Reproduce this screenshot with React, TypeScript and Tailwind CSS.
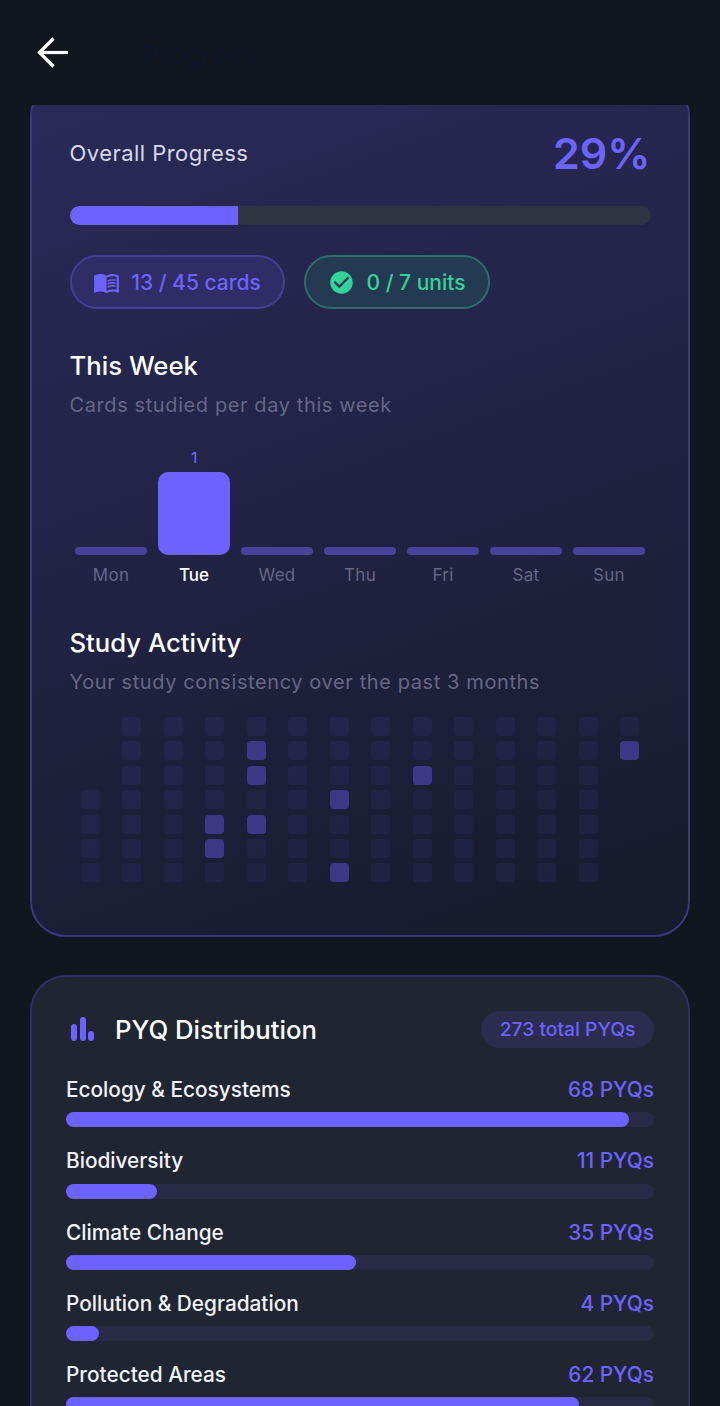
import React from "react";
import { MdCheckCircle, MdMenuBook } from "react-icons/md";

const days = [
  { label: "Mon", count: 0 },
  { label: "Tue", count: 1 },
  { label: "Wed", count: 0 },
  { label: "Thu", count: 0 },
  { label: "Fri", count: 0 },
  { label: "Sat", count: 0 },
  { label: "Sun", count: 0 },
];

// rows that hold a cell per column, then the rows that were studied
const heatmap = [
  { rows: [3, 4, 5, 6], active: [] },
  { rows: [0, 1, 2, 3, 4, 5, 6], active: [] },
  { rows: [0, 1, 2, 3, 4, 5, 6], active: [] },
  { rows: [0, 1, 2, 3, 4, 5, 6], active: [4, 5] },
  { rows: [0, 1, 2, 3, 4, 5, 6], active: [1, 2, 4] },
  { rows: [0, 1, 2, 3, 4, 5, 6], active: [] },
  { rows: [0, 1, 2, 3, 4, 5, 6], active: [3, 6] },
  { rows: [0, 1, 2, 3, 4, 5, 6], active: [] },
  { rows: [0, 1, 2, 3, 4, 5, 6], active: [2] },
  { rows: [0, 1, 2, 3, 4, 5, 6], active: [] },
  { rows: [0, 1, 2, 3, 4, 5, 6], active: [] },
  { rows: [0, 1, 2, 3, 4, 5, 6], active: [] },
  { rows: [0, 1, 2, 3, 4, 5, 6], active: [] },
  { rows: [0, 1], active: [1] },
];

const units = [
  { name: "Ecology & Ecosystems", pyqs: 68 },
  { name: "Biodiversity", pyqs: 11 },
  { name: "Climate Change", pyqs: 35 },
  { name: "Pollution & Degradation", pyqs: 4 },
  { name: "Protected Areas", pyqs: 62 },
];
const maxPyqs = 71;

const App = () => {
  return (
    <div className="h-[1406px] w-full overflow-hidden bg-[#12161f] flex flex-col font-['Inter',sans-serif]">
      <header className="h-[105px] shrink-0 flex items-center pl-[37px]">
        <svg width="31" height="31" viewBox="0 0 31 31" fill="none" stroke="#ffffff" strokeWidth="3.2">
          <path d="M31 15.5H3" />
          <path d="M16.5 1.5L2.5 15.5L16.5 29.5" />
        </svg>
        <h1 className="ml-[75px] mt-[3px] text-[26px] tracking-[0.5px] font-medium text-[#0f172a]">Progress</h1>
      </header>

      <main className="flex-1 overflow-hidden px-[30px]">
        <section className="-mt-[25px] rounded-[36px] border-2 border-[#3b3780] bg-[linear-gradient(160deg,#2a2a5a,#171b2b)] pt-[42px] pb-[53px] px-[37.5px]">
          <div className="flex h-[58px] items-center justify-between">
            <span className="text-[22px] tracking-[0.45px] text-[#d7d9e9]">Overall Progress</span>
            <span className="text-[43px] font-semibold text-[#6c63ff]">29%</span>
          </div>

          <div className="mt-[24px] h-[19px] rounded-full bg-[#2f3342] overflow-hidden">
            <div className="h-full w-[29%] bg-[#6c63ff]" />
          </div>

          <div className="mt-[30px] flex gap-[19px]">
            <div className="flex h-[54px] w-[215px] items-center justify-center gap-[11px] rounded-full border-2 border-[#443f94] bg-[#2f2c66]">
              <MdMenuBook size={27} className="text-[#6c63ff]" />
              <span className="pt-[2px] text-[21px] font-medium text-[#6c63ff]">13 / 45 cards</span>
            </div>
            <div className="flex h-[54px] w-[186px] items-center justify-center gap-[12px] rounded-full border-2 border-[#2d6e6c] bg-[#233a52]">
              <MdCheckCircle size={27} className="text-[#34d399]" />
              <span className="pt-[2px] text-[21px] font-medium text-[#34d399]">0 / 7 units</span>
            </div>
          </div>

          <h2 className="mt-[41px] h-[32px] text-[25.7px] leading-[32px] font-medium text-white">This Week</h2>
          <p className="mt-[10px] h-[26px] text-[20px] leading-[26px] tracking-[0.6px] text-[#666685]">Cards studied per day this week</p>

          <div className="mt-[30px] flex">
            {days.map((day) => (
              <div key={day.label} className="flex-1 flex flex-col items-center justify-end">
                {day.count > 0 && <span className="h-[18px] mb-[6px] pt-[1px] text-[15px] leading-[18px] font-medium text-[#6c63ff]">{day.count}</span>}
                <div className={day.count > 0 ? "h-[83px] w-[72px] rounded-[10px] bg-[#6c63ff]" : "h-[8px] w-[72px] rounded-full bg-[#47439a]"} />
                <span className={day.count > 0 ? "mt-[9px] h-[22px] text-[17px] leading-[22px] font-medium text-white" : "mt-[9px] h-[22px] text-[17px] leading-[22px] tracking-[0.3px] text-[#666685]"}>{day.label}</span>
              </div>
            ))}
          </div>

          <h2 className="mt-[41px] h-[32px] text-[25.7px] leading-[32px] font-medium text-white">Study Activity</h2>
          <p className="mt-[10px] h-[26px] text-[20px] leading-[26px] tracking-[0.6px] text-[#666685]">Your study consistency over the past 3 months</p>

          <div className="mt-[22px] flex">
            {heatmap.map((col, i) => (
              <div key={i} className="flex-1 flex flex-col items-center gap-[5.4px]">
                {[0, 1, 2, 3, 4, 5, 6].map((row) =>
                  col.rows.includes(row) ? (
                    <div key={row} className={col.active.includes(row) ? "h-[19px] w-[19px] rounded-[4px] bg-[#3d3785]" : "h-[19px] w-[19px] rounded-[4px] bg-[#6c63ff]/[0.08]"} />
                  ) : (
                    <div key={row} className="h-[19px] w-[19px]" />
                  )
                )}
              </div>
            ))}
          </div>
        </section>

        <section className="mt-[38px] rounded-[36px] border-2 border-[#2f2f63] bg-[#1f2632] pt-[34px] px-[34px] pb-[40px]">
          <div className="flex h-[37px] items-center justify-between">
            <div className="flex items-center gap-[20px] pl-[4px]">
              <svg width="25" height="24" viewBox="0 0 25 24" fill="#6c63ff" className="-mt-[1px]">
                <rect x="1" y="7" width="6" height="17" rx="3" />
                <rect x="10" y="0" width="6" height="24" rx="3" />
                <rect x="18" y="14" width="6" height="10" rx="3" />
              </svg>
              <h2 className="text-[25.7px] font-medium text-white">PYQ Distribution</h2>
            </div>
            <span className="flex h-[37px] w-[173px] items-center justify-center rounded-full bg-[#2b2d4f] text-[19.3px] font-medium text-[#6c63ff]">273 total PYQs</span>
          </div>

          <div className="mt-[29px] flex flex-col gap-[21.2px]">
            {units.map((unit) => (
              <div key={unit.name}>
                <div className="flex h-[26px] items-center justify-between pb-[1px] text-[20.8px] font-medium">
                  <span className="text-[#f1f2f7]">{unit.name}</span>
                  <span className="text-[#6c63ff]">{unit.pyqs} PYQs</span>
                </div>
                <div className="mt-[9px] h-[15px] rounded-full bg-[#282a46]">
                  <div className="h-full rounded-full bg-[#6c63ff]" style={{ width: `${(unit.pyqs / maxPyqs) * 100}%` }} />
                </div>
              </div>
            ))}
          </div>
        </section>
      </main>
    </div>
  );
};

export default App;
